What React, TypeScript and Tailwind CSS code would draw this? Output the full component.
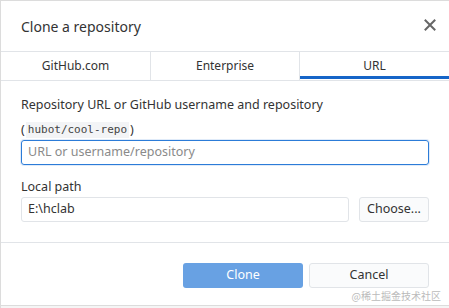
import React from "react";

export default function App() {
  const font = { fontFamily: '"Noto Sans", "Open Sans", sans-serif' };
  return (
    <div
      className="w-[449px] h-[308px] bg-white border-l border-t border-[#dcdcdc] flex flex-col text-[#333] relative overflow-hidden"
      style={font}
    >
      <div className="h-[50px] flex items-center justify-between pl-[20px] pr-[13px]">
        <div className="text-[14px] text-[#333]">Clone a repository</div>
        <svg width="12" height="12" viewBox="0 0 12 12" className="mt-[-2px]">
          <path d="M1.5 1.5 L10.5 10.5 M10.5 1.5 L1.5 10.5" stroke="#666" strokeWidth="2" strokeLinecap="square" />
        </svg>
      </div>
      <div className="h-[30px] border-y border-[#e1e4e8] flex text-[12px] text-[#333]">
        <div className="w-[150px] flex items-center justify-center border-r border-[#e1e4e8]">GitHub.com</div>
        <div className="w-[149px] flex items-center justify-center border-r border-[#e1e4e8]">Enterprise</div>
        <div className="flex-1 flex items-center justify-center relative">
          URL
          <div className="absolute left-0 right-0 bottom-[1px] h-[3px] bg-[#1565c8]" />
        </div>
      </div>
      <div className="px-[20px] pt-[16px] flex flex-col">
        <div className="text-[12.5px] leading-[16px]">Repository URL or GitHub username and repository</div>
        <div className="text-[12.5px] leading-[16px] mt-[9px] flex items-center">
          (
          <span
            className="bg-[#f3f4f6] px-[2px] text-[11px] text-[#444] mx-[1px]"
            style={{ fontFamily: '"DejaVu Sans Mono", "Liberation Mono", monospace' }}
          >
            hubot/cool-repo
          </span>
          )
        </div>
        <div className="mt-[2px] h-[25px] border border-[#2c7cd8] rounded-[3px] flex items-center px-[6px] shadow-[0_0_0_1px_rgba(44,124,216,0.15)]">
          <span className="text-[12.5px] text-[#8a8a8a]">URL or username/repository</span>
        </div>
        <div className="text-[12.5px] leading-[16px] mt-[14px]">Local path</div>
        <div className="mt-[2px] flex gap-[10px]">
          <div className="w-[328px] h-[25px] border border-[#e1e4e8] rounded-[3px] flex items-center px-[6px] text-[12.5px]">
            E:\hclab
          </div>
          <div className="flex-1 h-[25px] border border-[#e1e4e8] rounded-[3px] bg-[#fafbfc] flex items-center justify-center text-[12.5px]">
            Choose...
          </div>
        </div>
      </div>
      <div className="mt-[20px] border-t border-[#e1e4e8] flex justify-end gap-[6px] pr-[20px] pt-[20px]">
        <div className="w-[120px] h-[25px] rounded-[3px] bg-[#68a1e3] text-white flex items-center justify-center text-[12.5px]">
          Clone
        </div>
        <div className="w-[120px] h-[25px] rounded-[3px] border border-[#e1e4e8] bg-[#fafbfc] flex items-center justify-center text-[12.5px]">
          Cancel
        </div>
      </div>
      <div
        className="absolute right-[8px] bottom-[5px] text-[10px] text-[#bbb]"
        style={{ fontFamily: '"Noto Sans CJK SC", sans-serif' }}
      >
        @稀土掘金技术社区
      </div>
      <div className="absolute left-0 right-0 bottom-0 h-[3px] border-t border-[#dcdcdc] bg-[#f5f5f5]" />
    </div>
  );
}
